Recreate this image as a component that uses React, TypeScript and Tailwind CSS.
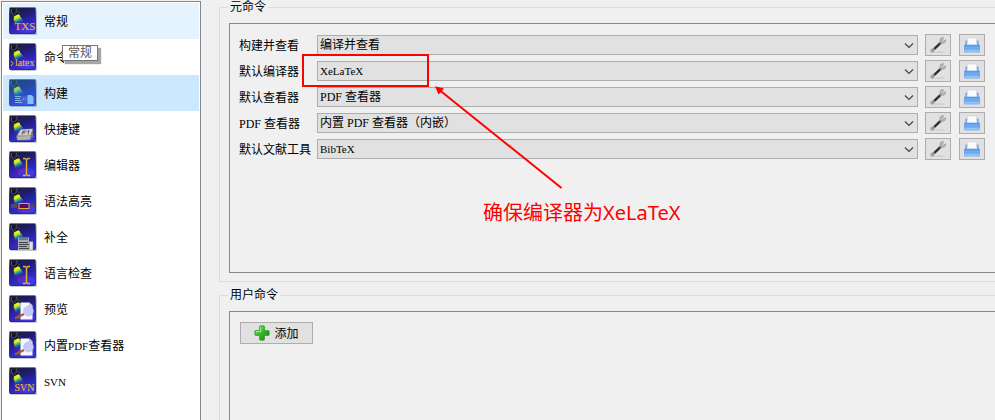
import React, { useState } from "react";

type IconKind =
  | "txs"
  | "latex"
  | "build"
  | "key"
  | "cursor"
  | "highlight"
  | "list"
  | "preview"
  | "svn";

const pages: { label: string; latin?: string; rest?: string; icon: IconKind }[] = [
  { label: "常规", icon: "txs" },
  { label: "命令", icon: "latex" },
  { label: "构建", icon: "build" },
  { label: "快捷键", icon: "key" },
  { label: "编辑器", icon: "cursor" },
  { label: "语法高亮", icon: "highlight" },
  { label: "补全", icon: "list" },
  { label: "语言检查", icon: "cursor" },
  { label: "预览", icon: "preview" },
  { label: "内置", latin: "PDF", rest: "查看器", icon: "preview" },
  { label: "", latin: "SVN", icon: "svn" },
];

const commands = [
  { id: "view", label: "构建并查看", value: "编译并查看", size: "text-[12px]" },
  { id: "compiler", label: "默认编译器", value: "XeLaTeX", size: "text-[11px]" },
  { id: "viewer", label: "默认查看器", value: "PDF 查看器", size: "text-[12px]" },
  { id: "pdf", label: "PDF 查看器", value: "内置 PDF 查看器（内嵌）", size: "text-[12px]" },
  { id: "bib", label: "默认文献工具", value: "BibTeX", size: "text-[11px]" },
];

function SharedGradients() {
  return (
    <svg className="absolute h-0 w-0" aria-hidden="true">
      <defs>
        <linearGradient id="tile" x1="0.2" y1="0" x2="0.6" y2="1">
          <stop offset="0" stopColor="#1b1d3c" />
          <stop offset="0.3" stopColor="#1d1c66" />
          <stop offset="0.65" stopColor="#2a25b4" />
          <stop offset="1" stopColor="#3533e0" />
        </linearGradient>
        <linearGradient id="beam" x1="8" y1="9" x2="12.5" y2="19" gradientUnits="userSpaceOnUse">
          <stop offset="0" stopColor="#eef020" />
          <stop offset="0.18" stopColor="#d0e020" />
          <stop offset="0.34" stopColor="#3cc070" />
          <stop offset="0.5" stopColor="#1d6cb0" />
          <stop offset="0.7" stopColor="#2a30b0" stopOpacity="0.5" />
          <stop offset="1" stopColor="#5a20b0" stopOpacity="0" />
        </linearGradient>
        <radialGradient id="glow" cx="11" cy="19" r="8" gradientUnits="userSpaceOnUse">
          <stop offset="0" stopColor="#7c1490" stopOpacity="0.7" />
          <stop offset="1" stopColor="#6a1aa0" stopOpacity="0" />
        </radialGradient>
        <linearGradient id="edge" x1="0" y1="0" x2="0" y2="1">
          <stop offset="0" stopColor="#a458c4" />
          <stop offset="0.3" stopColor="#5a2090" />
          <stop offset="1" stopColor="#4c18a0" />
        </linearGradient>
        <linearGradient id="tray" x1="0" y1="0" x2="0" y2="1">
          <stop offset="0" stopColor="#5a9aec" />
          <stop offset="0.5" stopColor="#78b2f6" />
          <stop offset="1" stopColor="#a8d4ff" />
        </linearGradient>
        <linearGradient id="plus" x1="0" y1="0" x2="1" y2="1">
          <stop offset="0" stopColor="#7ada5c" />
          <stop offset="0.5" stopColor="#37b52a" />
          <stop offset="1" stopColor="#128012" />
        </linearGradient>
      </defs>
    </svg>
  );
}

function Glyph({ kind }: { kind: IconKind }) {
  const word = "font-['Liberation_Serif',serif]";
  switch (kind) {
    case "txs":
      return <text x="5.5" y="23" fontSize="11" fill="#ecc81c" className={word}>TXS</text>;
    case "svn":
      return <text x="5.5" y="24" fontSize="10" fill="#ecc81c" className={word}>SVN</text>;
    case "latex":
      return (
        <g>
          <path d="M2 18l2 2.500-2 2.500" fill="none" stroke="#ecc81c" />
          <text x="6" y="23" fontSize="10" fill="#ecc81c" className={word}>latex</text>
        </g>
      );
    case "build":
      return (
        <g>
          <path d="M6 17.500h6M6 19.500h5M6 21.500h6M6 23.500h7" stroke="#b4c8e4" />
          <path d="M13 18l2 2-2 2M15.500 18l2 2-2 2" fill="none" stroke="#7894b8" />
          <path d="M18.500 16h4l2 2v7h-6z" fill="#b9dcff" />
        </g>
      );
    case "key":
      return (
        <g>
          <path d="M7 21.500L11 14.500L24 13.500L24 22L21 25L8.500 25.500z" fill="#77797c" />
          <path d="M8.500 20.500L12 14.500L23.500 14L21.500 20.500z" fill="#d0d0ce" />
          <path d="M8 21.500L21.500 21l-.5 3.500-12.500.5z" fill="#b4b4b2" />
          <path d="M13 19.500l1-3.500h3.500M13.500 17.800h3M18.500 16.500l1.500-1-1 4" fill="none" stroke="#4c4d50" strokeWidth="0.900" />
        </g>
      );
    case "cursor":
      return (
        <path
          d="M14 7.500h2l1.500 1 1.500-1h2M17.500 8v16M14 24.500h2l1.500-1 1.500 1h2"
          fill="none"
          stroke="#dcb424"
          strokeWidth="1.500"
        />
      );
    case "highlight":
      return (
        <g>
          <path d="M2 17h6v4H2zM22 17h3.500v4H22z" fill="#4c4c58" />
          <rect x="10" y="16.500" width="10" height="5" fill="#5c0860" stroke="#e0ac2c" />
        </g>
      );
    case "list":
      return (
        <g>
          <path d="M9 14.500h11v4h4V27H9z" fill="#a9acb4" />
          <path d="M10 16h9" stroke="#6c7684" strokeWidth="2" />
          <path d="M10 19.500h9M10 21.500h10M10 23.500h8M10 25.500h10" stroke="#42464e" />
          <rect x="21" y="19" width="2.500" height="7.500" fill="#e4e4e4" />
        </g>
      );
    case "preview":
      return (
        <g>
          <path d="M11.500 7.500h9l3 3v14h-12z" fill="#f6f6ff" />
          <path d="M20.500 7.500v3h3" fill="none" stroke="#9a9aae" strokeWidth="0.700" />
          <path d="M6 23.500l9-4.500" stroke="#94681c" strokeWidth="2.200" />
          <circle cx="19.500" cy="16" r="5" fill="#c6c8fa" stroke="#b0b2e6" strokeWidth="0.500" />
        </g>
      );
  }
}

function PageIcon({ kind, selected }: { kind: IconKind; selected: boolean }) {
  return (
    <svg className="size-7 shrink-0" viewBox="0 0 28 28" aria-hidden="true">
      <rect x="1" y="1" width="27" height="27" rx="1.500" fill="#000" opacity="0.22" />
      <rect x="0.500" y="0.500" width="26" height="26" rx="1" fill="url(#tile)" stroke="url(#edge)" />
      <path d="M1 11L20 11L26 26L1 26z" fill="url(#glow)" />
      <ellipse cx="17" cy="21.500" rx="8.500" ry="4.500" fill="#5c48e8" opacity="0.4" />
      <path d="M4.500 11L10.500 8.500L17 17L7 20z" fill="url(#beam)" />
      <path d="M2 2l2 4 1 3 5-2-1-3-2-1z" fill="#14161e" />
      <path d="M2.500 2v3.500l2.500 3M5 7l3.500-2.500M8 1.500l-1 3M9 4.500l1.500 2" fill="none" stroke="#5e636c" strokeWidth="0.800" />
      <path d="M4.500 9.800l4.500-2.600 2 1-.5 1.300-4.500 1.700z" fill="#eeee1c" />
      <Glyph kind={kind} />
      {selected && <rect width="27" height="27" rx="1" fill="#2c92e8" opacity="0.38" />}
    </svg>
  );
}

function WrenchIcon() {
  return (
    <svg className="size-4" viewBox="0 0 16 16" aria-hidden="true">
      <ellipse cx="9.500" cy="15" rx="5.500" ry="0.800" fill="#cccccc" />
      <path d="M2.500 13.500L11.500 5" stroke="#8a8c8e" strokeWidth="2.600" strokeLinecap="round" />
      <path d="M4.500 11.700L10 6.500" stroke="#2a2c2e" strokeWidth="2" />
      <path
        d="M13.500 0.800c-2.500-.6-4.200 1.200-3.300 3.700l1.800 1.600c2 .5 4-1 3.600-3.300l-2 1.400-1.200-1z"
        fill="#bcbec0"
        stroke="#85878a"
        strokeWidth="0.600"
      />
      <circle cx="2.300" cy="13.700" r="1.600" fill="#c6c6c6" stroke="#777" strokeWidth="0.600" />
      <circle cx="2.300" cy="13.700" r="0.500" fill="#555" />
    </svg>
  );
}

function TrayIcon() {
  return (
    <svg className="size-4" viewBox="0 0 16 16" aria-hidden="true">
      <path d="M1.500 3.500h13l.5 6H1z" fill="#79aeee" />
      <path d="M2.800 4h10.400v6H2.800z" fill="#3b78cc" />
      <path d="M3.500 1h9l.6 7.500H2.900z" fill="#fbfbfb" stroke="#c4cbd4" strokeWidth="0.500" />
      <rect x="0.300" y="8" width="15.400" height="7" rx="0.600" fill="url(#tray)" stroke="#4f92e4" strokeWidth="0.600" />
      <path d="M0.500 12h15" stroke="#5a9cf0" strokeWidth="0.800" />
    </svg>
  );
}

function PlusIcon() {
  return (
    <svg className="size-4" viewBox="0 0 16 16" aria-hidden="true">
      <path
        d="M6.500 0.800h3q1 0 1 1v3.700h3.700q1 0 1 1v3q0 1-1 1h-3.700v3.700q0 1-1 1h-3q-1 0-1-1v-3.700H1.800q-1 0-1-1v-3q0-1 1-1h3.700V1.800q0-1 1-1z"
        fill="url(#plus)"
        stroke="#2c962c"
        strokeWidth="0.700"
      />
      <path d="M6.700 2v4.700H2" fill="none" stroke="#b4efa0" strokeWidth="1" />
    </svg>
  );
}

function SmallButton({ title, children }: { title: string; children: React.ReactNode }) {
  return (
    <button
      type="button"
      aria-label={title}
      className="flex h-[22px] w-[26px] shrink-0 items-center justify-center border border-[#adadad] bg-[#e1e1e1]"
    >
      {children}
    </button>
  );
}

function Group({ title, children, className }: { title: string; children: React.ReactNode; className: string }) {
  return (
    <fieldset className="min-w-0 border border-r-0 border-[#dcdcdc] pt-2 pb-2 pl-[9px]">
      <legend className="-ml-px px-[2px] leading-[15px]">{title}</legend>
      <div className={`border border-r-0 border-[#828790] pt-[10px] pr-[10px] ${className}`}>{children}</div>
    </fieldset>
  );
}

export default function App() {
  const [current, setCurrent] = useState(2);

  return (
    <div className="relative flex h-screen overflow-hidden bg-[#f0f0f0] font-['Liberation_Serif','Noto_Sans_CJK_SC',serif] text-[12px] text-black">
      <SharedGradients />
      <nav className="mt-px ml-px w-[200px] shrink-0 border border-b-0 border-[#828790] bg-white p-px">
        {pages.map((page, i) => (
          <button
            key={i}
            type="button"
            onClick={() => setCurrent(i)}
            className={`flex h-9 w-full items-center gap-[7px] pl-[6px] text-left ${
              i === current ? "bg-[#cce8ff]" : i === 0 ? "bg-[#e5f3ff]" : "bg-white"
            }`}
          >
            <PageIcon kind={page.icon} selected={i === current} />
            <span className="pt-px leading-4">
              {page.label}
              {page.latin && <span className="text-[11px]">{page.latin}</span>}
              {page.rest}
            </span>
          </button>
        ))}
      </nav>

      <main className="ml-[18px] flex min-w-0 flex-1 flex-col gap-[6px]">
        <Group title="元命令" className="min-h-[250px] pl-[9px]">
          <div className="flex flex-col gap-1">
            {commands.map((c) => (
              <div key={c.id} className="flex items-center">
                <label htmlFor={c.id} className="w-[78px] shrink-0 pt-px leading-5 whitespace-nowrap">
                  {c.label}
                </label>
                <div className="relative mr-[7px] min-w-0 flex-1">
                  <select
                    id={c.id}
                    className={`block h-5 w-full appearance-none border border-[#adadad] bg-[#e1e1e1] pl-[2px] leading-[18px] ${c.size}`}
                  >
                    <option>{c.value}</option>
                  </select>
                  <svg className="pointer-events-none absolute top-[7px] right-1 h-[7px] w-[10px]" viewBox="0 0 10 7" aria-hidden="true">
                    <path d="M1 1.500l4 4 4-4" fill="none" stroke="#444" strokeWidth="1.200" />
                  </svg>
                </div>
                <div className="flex gap-2">
                  <SmallButton title="配置">
                    <WrenchIcon />
                  </SmallButton>
                  <SmallButton title="选择程序">
                    <TrayIcon />
                  </SmallButton>
                </div>
              </div>
            ))}
          </div>
        </Group>

        <Group title="用户命令" className="min-h-[250px] pl-[10px]">
          <button
            type="button"
            className="flex h-[22px] w-[73px] items-center justify-center gap-1 border border-[#adadad] bg-[#e1e1e1]"
          >
            <PlusIcon />
            <span className="pt-px">添加</span>
          </button>
        </Group>
      </main>

      <div
        role="tooltip"
        className="absolute top-[45px] left-[62px] border border-[#767676] bg-white px-[5px] leading-[14px] text-[#575757] shadow-[3px_3px_1px_rgba(0,0,0,0.35)]"
      >
        常规
      </div>

      <div className="pointer-events-none absolute top-[54px] left-[302px] h-[33px] w-[127px] border-2 border-[#ff0000]" />
      <svg className="pointer-events-none absolute top-[84px] left-[433px] h-[108px] w-[132px]" viewBox="433 84 132 108" aria-hidden="true">
        <path d="M561.500 188L440 90.500" stroke="#ff0000" strokeWidth="2" />
        <path d="M435 86.300L444 88.500L441.500 91.500L438.500 94.500z" fill="#ff0000" />
      </svg>
      <p className="pointer-events-none absolute top-[200px] left-[483px] font-['Noto_Sans','Noto_Sans_CJK_SC',sans-serif] text-[20px] leading-[26px] whitespace-nowrap text-[#ff0000]">
        确保编译器为XeLaTeX
      </p>
    </div>
  );
}
